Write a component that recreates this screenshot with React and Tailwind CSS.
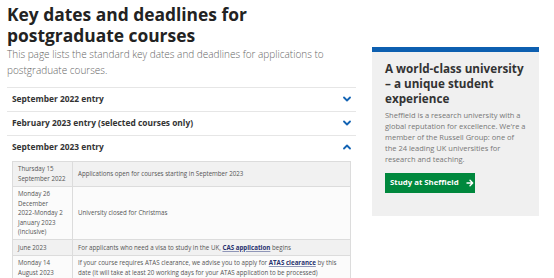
const entries = [
  { label: "September 2022 entry", open: false },
  { label: "February 2023 entry (selected courses only)", open: false },
  { label: "September 2023 entry", open: true },
];

const rows = [
  {
    date: "Thursday 15 September 2022",
    text: "Applications open for courses starting in September 2023",
  },
  {
    date: (
      <>
        Monday 26 December
        <br />
        2022-Monday 2 January 2023 (inclusive)
      </>
    ),
    text: "University closed for Christmas",
  },
  {
    date: "June 2023",
    text: (
      <>
        For applicants who need a visa to study in the UK,{" "}
        <a className="font-bold text-[#27306e] underline decoration-[#8f96b8] underline-offset-1">
          CAS application
        </a>{" "}
        begins
      </>
    ),
  },
  {
    date: "Monday 14 August 2023",
    text: (
      <>
        If your course requires ATAS clearance, we advise you to apply for{" "}
        <a className="font-bold text-[#27306e] underline decoration-[#8f96b8] underline-offset-1">
          ATAS clearance
        </a>{" "}
        by this date (it will take at least 20 working days for your ATAS application to be
        processed)
      </>
    ),
  },
];

function Chevron({ up }) {
  return (
    <svg width="8" height="6" viewBox="0 0 8 6" className="text-[#1464b4]">
      <polyline
        points={up ? "1,4.5 4,1.5 7,4.5" : "1,1.5 4,4.5 7,1.5"}
        fill="none"
        stroke="currentColor"
        strokeWidth="1.8"
        strokeLinecap="round"
        strokeLinejoin="round"
      />
    </svg>
  );
}

function DatesTable() {
  return (
    <table className="ml-[5px] mt-[2px] w-[339px] table-fixed border-collapse text-[6.2px] leading-[9.5px] text-[#555]">
      <tbody>
        {rows.map((row, i) => (
          <tr key={i} className={i % 2 === 0 ? "bg-[#f1f1f1]" : "bg-[#fbfbfb]"}>
            <td className="w-[60px] border border-[#dcdcdc] px-[5px] py-[2.5px] align-middle">
              {row.date}
            </td>
            <td className="border border-[#dcdcdc] px-[5px] py-[2.5px] align-middle">
              {row.text}
            </td>
          </tr>
        ))}
      </tbody>
    </table>
  );
}

export default function App() {
  return (
    <div className="flex h-[278px] w-[554px] gap-4 overflow-hidden bg-white pl-[7px] font-['Open_Sans',sans-serif]">
      <main className="w-[349px] shrink-0 pt-[3.5px]">
        <h1 className="text-[17.4px] font-bold leading-[21px] text-[#222]">
          Key dates and deadlines for postgraduate courses
        </h1>
        <p className="text-[10px] font-light leading-[16px] text-[#666]">
          This page lists the standard key dates and deadlines for applications to postgraduate
          courses.
        </p>

        <div className="mt-[9px]">
          {entries.map((entry) => (
            <section key={entry.label} className="border-t border-[#e6e6e6]">
              <div className="flex h-[23px] items-center justify-between pl-[5px] pr-[5px]">
                <span className="text-[8.4px] font-bold text-[#333]">{entry.label}</span>
                <Chevron up={entry.open} />
              </div>
              {entry.open ? <DatesTable /> : null}
            </section>
          ))}
        </div>
      </main>

      <aside className="mt-[47px] h-[169px] w-[167px] shrink-0 border-t-[5px] border-[#0d5fb0] bg-[#f0f0f0] px-[13px] pt-[8.5px]">
        <h2 className="text-[11.7px] font-bold leading-[15px] text-[#333]">
          A world-class university – a unique student experience
        </h2>
        <p className="mt-[4px] text-[7.5px] leading-[11px] text-[#777]">
          Sheffield is a research university with a global reputation for excellence. We're a
          member of the Russell Group: one of the 24 leading UK universities for research and
          teaching.
        </p>
        <a className="mt-[8.5px] flex h-[20px] w-[90px] items-center gap-[7px] bg-[#00883d] pl-[5px] text-[7.8px] font-bold text-white">
          Study at Sheffield
          <svg width="8" height="8" viewBox="0 0 8 8">
            <path
              d="M1 4h5.5M4 1.3 6.7 4 4 6.7"
              fill="none"
              stroke="white"
              strokeWidth="1.4"
              strokeLinecap="round"
              strokeLinejoin="round"
            />
          </svg>
        </a>
      </aside>
    </div>
  );
}
